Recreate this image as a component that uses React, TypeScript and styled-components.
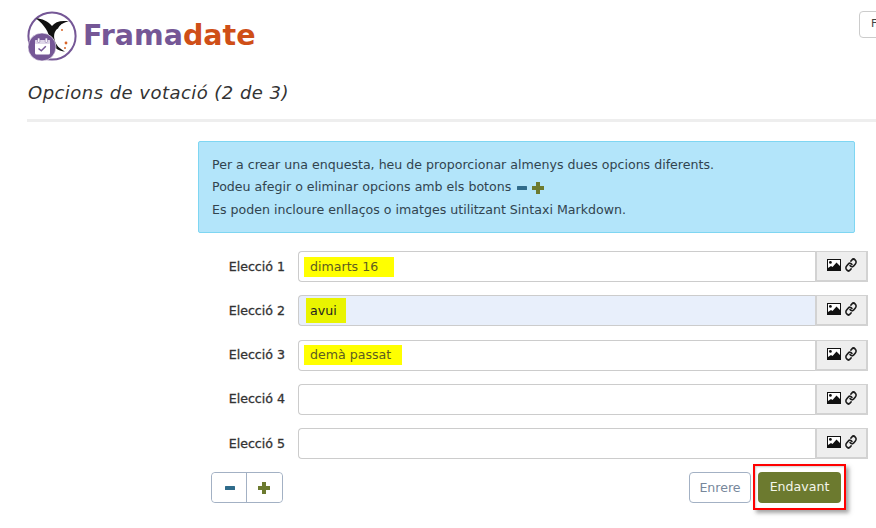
import React from "react"
import styled, { createGlobalStyle } from "styled-components"

const GlobalStyle = createGlobalStyle`
  html, body {
    margin: 0;
    padding: 0;
    background: #fff;
    overflow: hidden;
  }
  body {
    font-family: "DejaVu Sans", Verdana, sans-serif;
    font-size: 12.6px;
    color: #333;
  }
`

const Page = styled.div`
  width: 876px;
  height: 528px;
  overflow: hidden;
  padding: 11px 0 0 27px;
  box-sizing: border-box;
  position: relative;
`

const Header = styled.header`
  display: flex;
  align-items: center;
  justify-content: space-between;
  height: 50px;
`

const Brand = styled.div`
  display: flex;
  align-items: center;
  gap: 5px;
  margin-left: -1px;
`

const Wordmark = styled.div`
  font-size: 28.5px;
  font-weight: 700;
  line-height: 1;
  margin-top: 1px;
  color: #755796;
  span {
    color: #cf4f17;
  }
`

const LangBox = styled.div`
  width: 40px;
  height: 27px;
  margin-top: -24px;
  margin-right: -23px;
  border: 1px solid #ccc;
  border-radius: 4px;
  box-sizing: border-box;
  padding: 5px 0 0 11px;
  font-size: 11px;
  color: #444;
`

const Title = styled.h1`
  margin: 21px 0 0 1px;
  font-size: 18px;
  line-height: 22px;
  font-weight: 400;
  font-style: italic;
  color: #333;
  letter-spacing: 0.46px;
`

const Rule = styled.div`
  height: 3px;
  margin-top: 15px;
  background: #eee;
`

const Content = styled.main`
  margin: 19px 0 0 171px;
  width: 670px;
`

const Alert = styled.div`
  width: 657px;
  height: 92px;
  box-sizing: border-box;
  padding: 12px 13px;
  background: #b3e5fa;
  border: 1px solid #7fd6f2;
  border-radius: 2px;
  color: #31444f;
  font-size: 12.6px;
  line-height: 22.5px;
`

const AlertLine = styled.div`
  height: 22.4px;
`

const AlertIcons = styled.span`
  display: inline-flex;
  align-items: center;
  gap: 5px;
  height: 12px;
  margin-left: 2px;
  vertical-align: middle;
`

const Rows = styled.div`
  margin-top: 18px;
  display: flex;
  flex-direction: column;
  gap: 13.25px;
`

const Row = styled.div`
  display: flex;
  align-items: center;
  height: 31px;
`

const Label = styled.label`
  width: 87px;
  text-align: right;
  margin-right: 13px;
  padding-bottom: 0.6px;
  font-size: 12.6px;
  font-weight: 400;
  color: #333;
  -webkit-text-stroke: 0.3px #333;
`

const InputGroup = styled.div`
  display: flex;
  width: 570px;
  height: 31px;
`

const Field = styled.div<{ $focus?: boolean }>`
  flex: 1;
  display: flex;
  align-items: center;
  box-sizing: border-box;
  padding-left: 5px;
  border: 1px solid #ccc;
  border-right: 0;
  border-radius: 4px 0 0 4px;
  background: ${(p) => (p.$focus ? "#e8effb" : "#fff")};
  font-size: 12.6px;
`

const Marked = styled.span<{ $width: number; $height: number; $inset: number; $focus?: boolean }>`
  display: flex;
  align-items: center;
  width: ${(p) => p.$width}px;
  height: ${(p) => p.$height}px;
  margin-left: ${(p) => p.$inset}px;
  padding-left: ${(p) => 6 - p.$inset}px;
  padding-bottom: 0.6px;
  box-sizing: border-box;
  background: ${(p) => (p.$focus ? "#e9f400" : "#ffff00")};
  color: ${(p) => (p.$focus ? "#222" : "#5d5d20")};
`

const Addon = styled.div`
  width: 53px;
  display: flex;
  align-items: center;
  justify-content: center;
  gap: 4px;
  box-sizing: border-box;
  padding: 0 0 2px 1px;
  border-style: solid;
  border-width: 1px 2px 2px 2px;
  border-color: #d2d2d2;
  background: #eee;
`

const Actions = styled.div`
  margin-top: 13px;
  width: 657px;
  display: flex;
  justify-content: space-between;
  align-items: center;
`

const StepGroup = styled.div`
  display: flex;
  margin-left: 13px;
  width: 72px;
  height: 31px;
  box-sizing: border-box;
  border: 1px solid #a3b1c4;
  border-radius: 4px;
`

const StepButton = styled.button`
  width: 34px;
  display: flex;
  align-items: center;
  justify-content: center;
  padding: 0 0 0 2px;
  border: 0;
  background: #fff;
  border-radius: 4px;
  & + & {
    flex: 1;
    padding: 0 2px 0 0;
    border-left: 1px solid #a3b1c4;
    border-radius: 0 4px 4px 0;
  }
`

const NavButtons = styled.div`
  display: flex;
  gap: 15px;
  margin-right: 14px;
`

const BackButton = styled.button`
  width: 62px;
  height: 31px;
  padding: 0 0 1px;
  border: 1px solid #a3b1c4;
  border-radius: 4px;
  background: #fff;
  color: #77879b;
  font: 12.6px "DejaVu Sans", Verdana, sans-serif;
`

const NextWrap = styled.div`
  position: relative;
  margin-left: -8px;
`

const NextButton = styled.button`
  display: block;
  width: 83px;
  height: 31px;
  padding: 0 0 2px;
  border: 0;
  border-radius: 4px;
  background: #6c7a2f;
  color: #f4f6ea;
  font: 12.6px "DejaVu Sans", Verdana, sans-serif;
`

const RedFrame = styled.div`
  position: absolute;
  inset: -8px -5px -7px -5px;
  border: 2px solid #f00;
  box-shadow: 3px 3px 4px rgba(90, 90, 90, 0.55), inset 1px 1px 2px rgba(120, 120, 120, 0.35);
  pointer-events: none;
`

const Logo = () => (
  <svg width="52" height="50" viewBox="0 0 52 50">
    <circle cx="26" cy="25" r="23.6" fill="#fff" stroke="#755796" strokeWidth="2" />
    <path
      d="M10 7.5C16 7.5 22 10 26 15 29 11 35 9 43 10.5 38 11 34 13.5 32 17.5 28.5 19.5 27.5 24 28.5 28.5 29.5 34 34 38 39 40.5 32 40.5 26 35 24 28 22.5 21.5 19 14 10 7.5z"
      fill="#111"
    />
    <path d="M35 13.5l4 -1 -1.5 3z" fill="#fff" />
    <circle cx="40" cy="32" r="1.4" fill="#d9662a" />
    <circle cx="36" cy="19" r="1" fill="#d9662a" />
    <circle cx="39" cy="37" r="1" fill="#d9662a" />
    <circle cx="16" cy="36" r="14" fill="#755796" stroke="#fff" strokeWidth="0.6" />
    <rect x="9" y="29" width="15" height="14.5" rx="1.5" fill="#fff" />
    <rect x="9" y="29" width="15" height="4" rx="1" fill="#ded6e8" />
    <rect x="11.6" y="27" width="2.2" height="4.5" rx="1" fill="#fff" stroke="#755796" strokeWidth="0.5" />
    <rect x="19.2" y="27" width="2.2" height="4.5" rx="1" fill="#fff" stroke="#755796" strokeWidth="0.5" />
    <path d="M12.5 37.5l2.8 2.3 4.5-4.5" fill="none" stroke="#755796" strokeWidth="1.5" />
  </svg>
)

const ImageIcon = () => (
  <svg width="14" height="12" viewBox="0 0 14 12">
    <rect width="14" height="12" fill="#111" />
    <rect x="1" y="1" width="12" height="10" fill="#fff" />
    <circle cx="3.4" cy="3.4" r="1.4" fill="#111" />
    <path d="M1 11V9l3-2 1.5 1L9.5 3.5 13 7v4z" fill="#111" />
  </svg>
)

const LinkIcon = () => (
  <svg
    width="12"
    height="14"
    viewBox="0 0 24 24"
    preserveAspectRatio="none"
    fill="none"
    stroke="#1c1c1c"
    strokeWidth="3"
    strokeLinecap="round"
  >
    <path d="M10 13a5 5 0 0 0 7.54.54l3-3a5 5 0 0 0-7.07-7.07l-1.72 1.71" />
    <path d="M14 11a5 5 0 0 0-7.54-.54l-3 3a5 5 0 0 0 7.07 7.07l1.71-1.71" />
  </svg>
)

const MinusIcon = () => (
  <svg width="10" height="4" viewBox="0 0 10 4">
    <rect width="10" height="4" rx="0.5" fill="#2f6b8a" />
  </svg>
)

const PlusIcon = () => (
  <svg width="12" height="12" viewBox="0 0 12 12">
    <path d="M4 0h4v4h4v4H8v4H4V8H0V4h4z" fill="#6c7a2f" />
  </svg>
)

const choices = [
  { id: 1, text: "dimarts 16", width: 90, height: 20, inset: 0 },
  { id: 2, text: "avui", width: 40, height: 25, inset: 2, focus: true },
  { id: 3, text: "demà passat", width: 98, height: 20, inset: 0 },
  { id: 4 },
  { id: 5 },
]

export default function App() {
  return (
    <Page>
      <GlobalStyle />
      <Header>
        <Brand>
          <Logo />
          <Wordmark>
            Frama<span>date</span>
          </Wordmark>
        </Brand>
        <LangBox>F</LangBox>
      </Header>
      <Title>Opcions de votació (2 de 3)</Title>
      <Rule />
      <Content>
        <Alert>
          <AlertLine>Per a crear una enquesta, heu de proporcionar almenys dues opcions diferents.</AlertLine>
          <AlertLine>
            Podeu afegir o eliminar opcions amb els botons{" "}
            <AlertIcons>
              <MinusIcon />
              <PlusIcon />
            </AlertIcons>
          </AlertLine>
          <AlertLine>Es poden incloure enllaços o imatges utilitzant Sintaxi Markdown.</AlertLine>
        </Alert>
        <Rows>
          {choices.map((c) => (
            <Row key={c.id}>
              <Label>Elecció {c.id}</Label>
              <InputGroup>
                <Field $focus={c.focus}>
                  {c.text && (
                    <Marked $width={c.width!} $height={c.height!} $inset={c.inset!} $focus={c.focus}>
                      {c.text}
                    </Marked>
                  )}
                </Field>
                <Addon>
                  <ImageIcon />
                  <LinkIcon />
                </Addon>
              </InputGroup>
            </Row>
          ))}
        </Rows>
        <Actions>
          <StepGroup>
            <StepButton aria-label="Eliminar">
              <MinusIcon />
            </StepButton>
            <StepButton aria-label="Afegir">
              <PlusIcon />
            </StepButton>
          </StepGroup>
          <NavButtons>
            <BackButton>Enrere</BackButton>
            <NextWrap>
              <NextButton>Endavant</NextButton>
              <RedFrame />
            </NextWrap>
          </NavButtons>
        </Actions>
      </Content>
    </Page>
  )
}
